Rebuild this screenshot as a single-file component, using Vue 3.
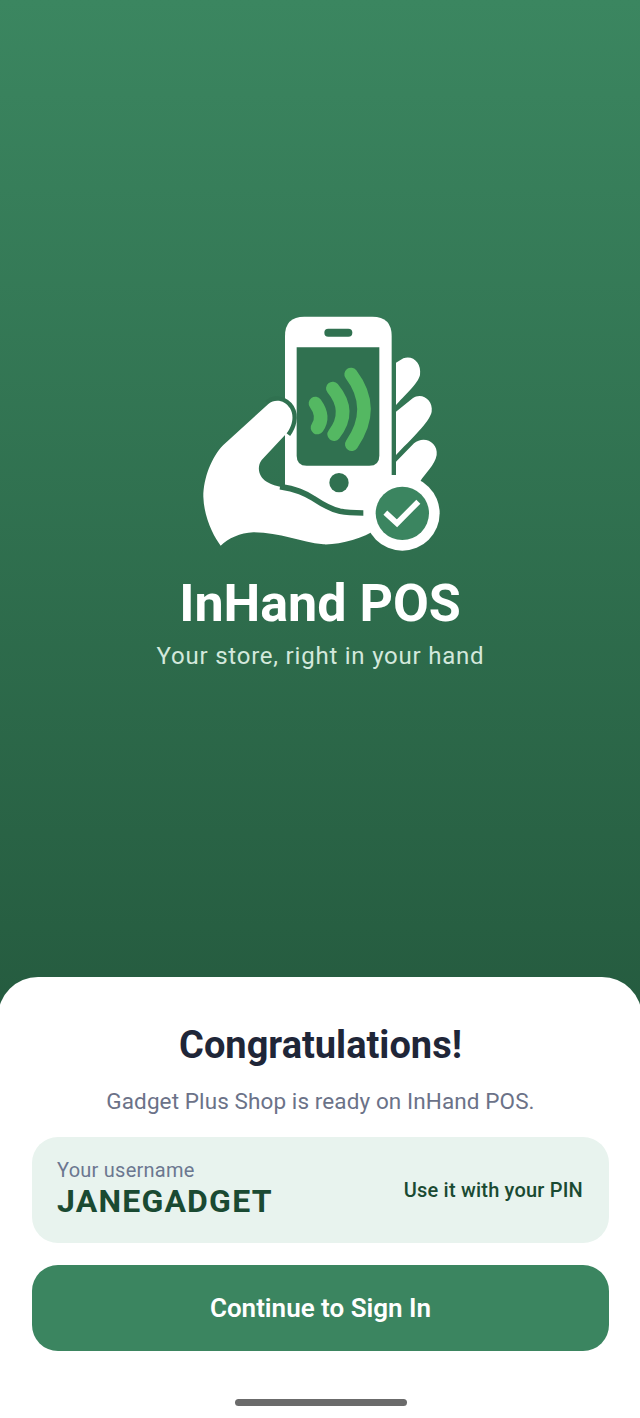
<template>
  <div class="screen">
    <div class="hero">
      <svg class="logo" viewBox="0 0 780 765" width="260" height="255">
        <path d="M343 35H547Q605 35 605 93V650H285V93Q285 35 343 35Z" fill="#fff" />
        <path d="M320 127H568V452Q568 482 538 482H350Q320 482 320 452Z" fill="#307150" />
        <rect x="403" y="71" width="84" height="24" rx="12" fill="#307150" />
        <circle cx="447" cy="533" r="29" fill="#307150" />
        <g fill="none" stroke="#54b862" stroke-linecap="round">
          <path d="M376 295Q405 335 382 368" stroke-width="40" />
          <path d="M428 250Q486 320 432 388" stroke-width="40" />
          <path d="M483 208Q560 310 485 418" stroke-width="40" />
        </g>
        <path d="M618 173L640 160C670 150 695 175 690 210C685 235 640 275 618 300Z" fill="#fff" />
        <path d="M618 320L668 280C695 260 730 285 725 320C720 350 660 405 618 450Z" fill="#fff" />
        <path d="M618 470L672 415C700 390 745 410 740 450C735 480 705 505 690 530H600V510H618Z" fill="#fff" />
        <path d="M235 297C255 280 285 285 300 310C315 335 305 365 290 385" fill="none" stroke="#307150" stroke-width="26" />
        <path
          d="M92 722C72 695 42 640 40 575C40 520 65 455 100 420L235 297C255 280 285 285 300 310C315 335 305 365 290 385L215 465C200 485 205 515 230 530C260 548 290 545 330 560C380 578 420 620 520 632L600 640L560 672C520 700 450 720 400 718C330 712 270 682 190 682C150 684 115 700 92 722Z"
          fill="#fff"
        />
        <path d="M270 545C320 552 345 565 370 580C400 600 420 612 450 619C475 624 500 624 520 624" fill="none" stroke="#307150" stroke-width="17" />
        <circle cx="637" cy="625" r="112" fill="#fff" />
        <circle cx="637" cy="625" r="80" fill="#3b8560" />
        <path d="M586 623L621 655L685 590" fill="none" stroke="#fff" stroke-width="17" />
      </svg>
      <h1 class="brand">InHand POS</h1>
      <p class="tagline">Your store, right in your hand</p>
    </div>

    <div class="sheet">
      <h2 class="title">Congratulations!</h2>
      <p class="message">Gadget Plus Shop is ready on InHand POS.</p>
      <div class="card">
        <div class="card-left">
          <span class="card-label">Your username</span>
          <span class="card-name">JANEGADGET</span>
        </div>
        <span class="card-hint">Use it with your PIN</span>
      </div>
      <button class="btn-continue">Continue to Sign In</button>
      <div class="home-bar"></div>
    </div>
  </div>
</template>

<script setup>
</script>

<style>
body {
  margin: 0;
}
</style>

<style scoped>
.screen {
  width: 640px;
  height: 1418px;
  display: flex;
  flex-direction: column;
  overflow: hidden;
  background: linear-gradient(180deg, #3b8660 0%, #255b3f 72%);
  font-family: Roboto, "Liberation Sans", sans-serif;
}

.hero {
  flex: 1;
  display: flex;
  flex-direction: column;
  align-items: center;
  padding-top: 305px;
  box-sizing: border-box;
}

.logo {
  display: block;
}

.brand {
  margin: 16px 0 0;
  font-size: 52px;
  line-height: 56px;
  font-weight: 700;
  color: #fff;
}

.tagline {
  margin: 9px 0 0 1px;
  font-size: 24px;
  line-height: 30px;
  letter-spacing: 0.78px;
  color: #d3e8dc;
}

.sheet {
  height: 441px;
  margin: 0 -2px;
  box-sizing: border-box;
  padding: 45px 33px 0 34px;
  display: flex;
  flex-direction: column;
  align-items: center;
  background: #fff;
  border-radius: 40px 40px 0 0;
}

.title {
  margin: 0;
  font-size: 38px;
  line-height: 46px;
  font-weight: 700;
  color: #1f2638;
}

.message {
  margin: 19px 0 0;
  font-size: 22.5px;
  line-height: 28px;
  letter-spacing: 0.1px;
  color: #6b7288;
}

.card {
  width: 100%;
  height: 106px;
  margin-top: 22px;
  padding: 0 26px 0 25px;
  box-sizing: border-box;
  display: flex;
  align-items: center;
  justify-content: space-between;
  background: #e8f3ee;
  border-radius: 26px;
}

.card-left {
  display: flex;
  flex-direction: column;
  margin-bottom: 2px;
}

.card-label {
  margin-bottom: 2px;
  font-size: 20px;
  line-height: 22px;
  letter-spacing: 0.25px;
  color: #6b7790;
}

.card-name {
  font-size: 32px;
  line-height: 36px;
  font-weight: 700;
  letter-spacing: 1.2px;
  color: #1a4a32;
}

.card-hint {
  font-size: 20px;
  font-weight: 500;
  letter-spacing: 0.2px;
  color: #1a4a32;
}

.btn-continue {
  width: 100%;
  height: 86px;
  margin-top: 22px;
  border: none;
  border-radius: 26px;
  background: #3b8560;
  color: #fff;
  font-family: inherit;
  font-size: 26px;
  font-weight: 600;
}

.home-bar {
  width: 172px;
  height: 7px;
  margin-top: 48px;
  border-radius: 4px;
  background: #6b6b6b;
}
</style>
